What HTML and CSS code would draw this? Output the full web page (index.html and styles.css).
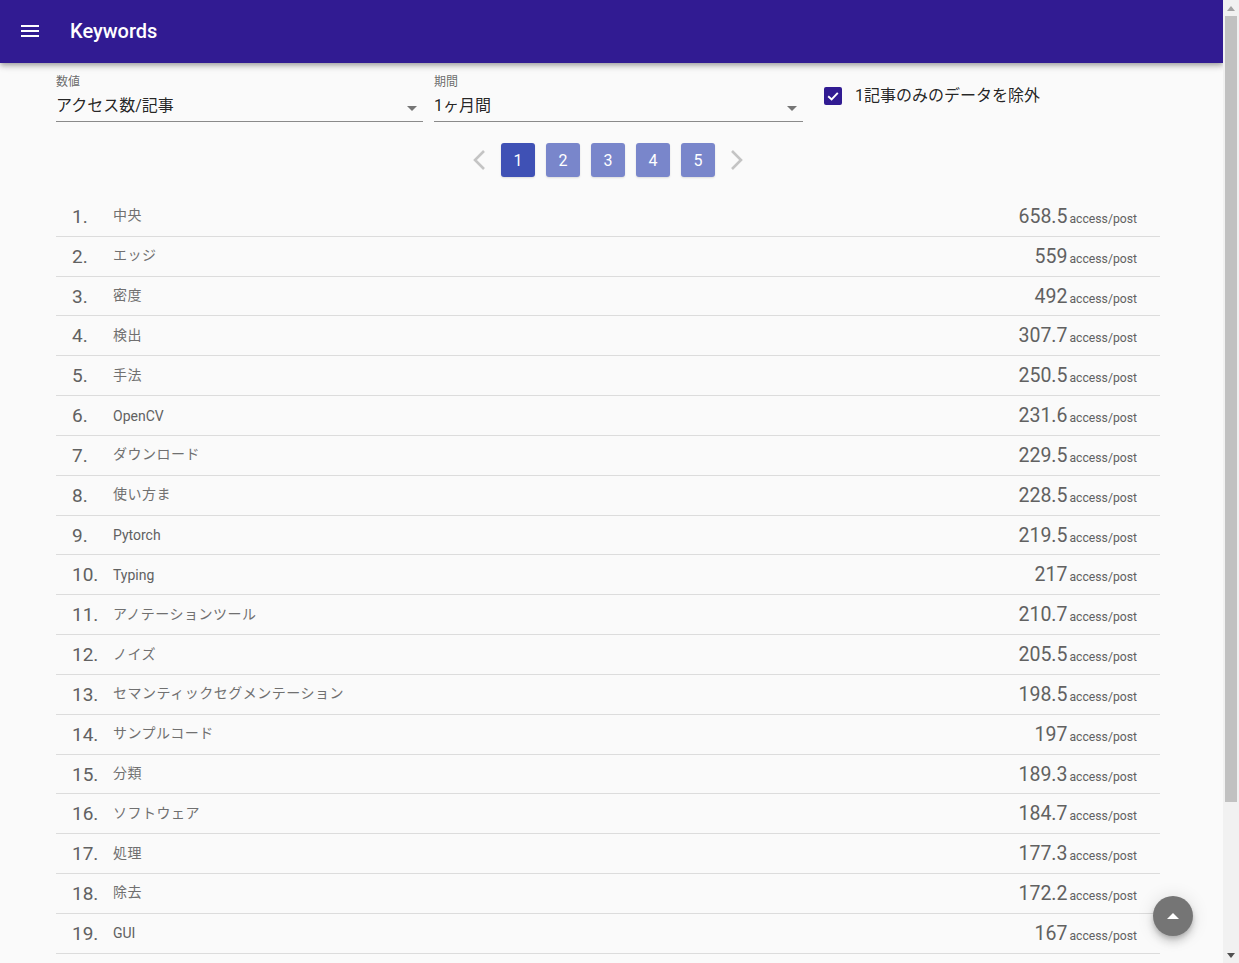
FILE: index.html
```html
<!DOCTYPE html>
<html lang="ja">
<head>
<meta charset="utf-8">
<title>Keywords</title>
<link rel="stylesheet" href="styles.css">
</head>
<body>
<div class="page">
  <header class="appbar">
    <button class="menu" aria-label="menu">
      <svg width="18" height="12" viewBox="0 0 18 12"><rect x="0" y="0" width="18" height="2" fill="#fff"/><rect x="0" y="5" width="18" height="2" fill="#fff"/><rect x="0" y="10" width="18" height="2" fill="#fff"/></svg>
    </button>
    <h1 class="title">Keywords</h1>
  </header>
  <main class="content">
    <div class="filters">
      <div class="select select-metric">
        <div class="select-label">数値</div>
        <div class="select-value">アクセス数/記事<span class="arrow"></span></div>
      </div>
      <div class="select select-period">
        <div class="select-label">期間</div>
        <div class="select-value">1ヶ月間<span class="arrow"></span></div>
      </div>
      <label class="check">
        <span class="box"><svg width="14" height="14" viewBox="0 0 14 14"><path d="M2.2 7.2 L5.6 10.4 L11.8 3.8" fill="none" stroke="#fff" stroke-width="1.9"/></svg></span>
        <span class="check-label">1記事のみのデータを除外</span>
      </label>
    </div>
    <nav class="pager">
      <span class="chev"><svg width="14" height="22" viewBox="0 0 14 22"><path d="M12 2 L3 11 L12 20" fill="none" stroke="#c4c4c4" stroke-width="2.6"/></svg></span>
      <span class="pg active">1</span>
      <span class="pg">2</span>
      <span class="pg">3</span>
      <span class="pg">4</span>
      <span class="pg">5</span>
      <span class="chev"><svg width="14" height="22" viewBox="0 0 14 22"><path d="M2 2 L11 11 L2 20" fill="none" stroke="#c4c4c4" stroke-width="2.6"/></svg></span>
    </nav>
    <ol class="ranking">
      <li class="row"><span class="rank">1.</span><span class="word ja">中央</span><span class="score"><span class="num">658.5</span><span class="unit">access/post</span></span></li>
      <li class="row"><span class="rank">2.</span><span class="word ja">エッジ</span><span class="score"><span class="num">559</span><span class="unit">access/post</span></span></li>
      <li class="row"><span class="rank">3.</span><span class="word ja">密度</span><span class="score"><span class="num">492</span><span class="unit">access/post</span></span></li>
      <li class="row"><span class="rank">4.</span><span class="word ja">検出</span><span class="score"><span class="num">307.7</span><span class="unit">access/post</span></span></li>
      <li class="row"><span class="rank">5.</span><span class="word ja">手法</span><span class="score"><span class="num">250.5</span><span class="unit">access/post</span></span></li>
      <li class="row"><span class="rank">6.</span><span class="word">OpenCV</span><span class="score"><span class="num">231.6</span><span class="unit">access/post</span></span></li>
      <li class="row"><span class="rank">7.</span><span class="word ja">ダウンロード</span><span class="score"><span class="num">229.5</span><span class="unit">access/post</span></span></li>
      <li class="row"><span class="rank">8.</span><span class="word ja">使い方ま</span><span class="score"><span class="num">228.5</span><span class="unit">access/post</span></span></li>
      <li class="row"><span class="rank">9.</span><span class="word">Pytorch</span><span class="score"><span class="num">219.5</span><span class="unit">access/post</span></span></li>
      <li class="row"><span class="rank">10.</span><span class="word">Typing</span><span class="score"><span class="num">217</span><span class="unit">access/post</span></span></li>
      <li class="row"><span class="rank">11.</span><span class="word ja">アノテーションツール</span><span class="score"><span class="num">210.7</span><span class="unit">access/post</span></span></li>
      <li class="row"><span class="rank">12.</span><span class="word ja">ノイズ</span><span class="score"><span class="num">205.5</span><span class="unit">access/post</span></span></li>
      <li class="row"><span class="rank">13.</span><span class="word ja">セマンティックセグメンテーション</span><span class="score"><span class="num">198.5</span><span class="unit">access/post</span></span></li>
      <li class="row"><span class="rank">14.</span><span class="word ja">サンプルコード</span><span class="score"><span class="num">197</span><span class="unit">access/post</span></span></li>
      <li class="row"><span class="rank">15.</span><span class="word ja">分類</span><span class="score"><span class="num">189.3</span><span class="unit">access/post</span></span></li>
      <li class="row"><span class="rank">16.</span><span class="word ja">ソフトウェア</span><span class="score"><span class="num">184.7</span><span class="unit">access/post</span></span></li>
      <li class="row"><span class="rank">17.</span><span class="word ja">処理</span><span class="score"><span class="num">177.3</span><span class="unit">access/post</span></span></li>
      <li class="row"><span class="rank">18.</span><span class="word ja">除去</span><span class="score"><span class="num">172.2</span><span class="unit">access/post</span></span></li>
      <li class="row"><span class="rank">19.</span><span class="word">GUI</span><span class="score"><span class="num">167</span><span class="unit">access/post</span></span></li>
    </ol>
  </main>
  <button class="fab" aria-label="top">
    <svg width="12" height="8" viewBox="0 0 12 8"><path d="M0 7 L6 1 L12 7 Z" fill="#fff"/></svg>
  </button>
</div>
<div class="scrollbar" aria-hidden="true">
  <div class="sb-btn sb-up"><svg width="8" height="5" viewBox="0 0 8 5"><path d="M0 5 L4 0 L8 5 Z" fill="#a3a3a3"/></svg></div>
  <div class="sb-track"><div class="sb-thumb"></div></div>
  <div class="sb-btn sb-down"><svg width="8" height="5" viewBox="0 0 8 5"><path d="M0 0 L4 5 L8 0 Z" fill="#505050"/></svg></div>
</div>
</body>
</html>
```

FILE: styles.css
```css
* { box-sizing: border-box; }
html, body {
  margin: 0;
  height: 100%;
  overflow: hidden;
}
body {
  display: flex;
  font-family: Roboto, "Noto Sans CJK JP", sans-serif;
  background: #fafafa;
  color: rgba(0,0,0,0.87);
}
.page {
  flex: 1;
  min-width: 0;
  height: 100%;
  overflow: hidden;
  position: relative;
}
.appbar {
  height: 63px;
  background: #311b92;
  display: flex;
  align-items: center;
  padding-left: 21px;
  box-shadow: 0 2px 4px -1px rgba(0,0,0,.2), 0 4px 5px 0 rgba(0,0,0,.14), 0 1px 10px 0 rgba(0,0,0,.12);
  position: relative;
  z-index: 2;
}
.menu {
  border: 0;
  background: transparent;
  padding: 0;
  width: 18px;
  height: 12px;
  display: flex;
  margin-top: -1px;
}
.title {
  margin: -1px 0 0 31px;
  color: #fff;
  font-size: 20px;
  font-weight: 500;
  line-height: 1;
}
.content {
  padding: 12px 63px 0 56px;
}
.filters {
  display: flex;
  align-items: flex-start;
}
.select {
  display: flex;
  flex-direction: column;
}
.select-metric { width: 367px; margin-right: 11px; }
.select-period { width: 369px; margin-right: 21px; }
.select-label {
  font-size: 12px;
  line-height: 12px;
  color: rgba(0,0,0,0.6);
  margin-top: 1px;
}
.select-value {
  position: relative;
  font-size: 16px;
  line-height: 20px;
  padding: 8px 0 5px;
  border-bottom: 1px solid #8a8a8a;
  color: rgba(0,0,0,0.87);
}
.arrow {
  position: absolute;
  right: 6px;
  top: 18px;
  width: 0;
  height: 0;
  border-left: 5px solid transparent;
  border-right: 5px solid transparent;
  border-top: 5px solid #757575;
}
.check {
  display: flex;
  align-items: center;
  margin-top: 11px;
}
.box {
  width: 18px;
  height: 18px;
  border-radius: 2px;
  background: #311b92;
  display: flex;
  align-items: center;
  justify-content: center;
  margin-right: 13px;
}
.check-label {
  font-size: 16px;
  line-height: 20px;
  color: rgba(0,0,0,0.87);
}
.pager {
  display: flex;
  justify-content: center;
  align-items: center;
  gap: 11px;
  margin-top: 21px;
  height: 34px;
}
.chev {
  width: 24px;
  height: 34px;
  display: flex;
  align-items: center;
  justify-content: center;
}
.chev:first-child { margin-right: -1px; }
.chev:last-child { margin-left: -1px; }
.pg {
  width: 34px;
  height: 34px;
  border-radius: 3px;
  background: #7986cb;
  color: #fff;
  font-size: 16px;
  display: flex;
  align-items: center;
  justify-content: center;
  box-shadow: 0 1px 2px rgba(0,0,0,.12);
}
.pg.active { background: #3f51b5; }
.ranking {
  list-style: none;
  margin: 20px 0 0;
  padding: 0;
}
.row {
  height: 39.83px;
  display: flex;
  align-items: center;
  padding: 0 23px 0 16px;
  border-bottom: 1px solid #dcdcdc;
}
.rank {
  width: 41px;
  font-size: 19px;
  color: #616161;
  flex-shrink: 0;
}
.word {
  flex: 1;
  font-size: 14px;
  color: #616161;
}
.word.ja {
  color: #707070;
  letter-spacing: 0.5px;
  padding-bottom: 4px;
}
.score {
  display: flex;
  align-items: baseline;
  color: #616161;
}
.num {
  font-size: 19.5px;
  margin-right: 2px;
}
.unit {
  font-size: 12.2px;
}
.fab {
  position: fixed;
  left: 1153px;
  top: 896px;
  width: 40px;
  height: 40px;
  border-radius: 50%;
  border: 0;
  background: #757575;
  display: flex;
  align-items: center;
  justify-content: center;
  padding: 0;
  box-shadow: 0 3px 5px -1px rgba(0,0,0,.2), 0 6px 10px 0 rgba(0,0,0,.14), 0 1px 18px 0 rgba(0,0,0,.12);
}
.scrollbar {
  width: 16px;
  height: 100%;
  background: #f1f1f1;
  display: flex;
  flex-direction: column;
  flex-shrink: 0;
}
.sb-btn {
  height: 16px;
  display: flex;
  align-items: center;
  justify-content: center;
}
.sb-track {
  flex: 1;
  padding: 0 2px;
}
.sb-thumb {
  height: 786px;
  background: #c1c1c1;
}
```
